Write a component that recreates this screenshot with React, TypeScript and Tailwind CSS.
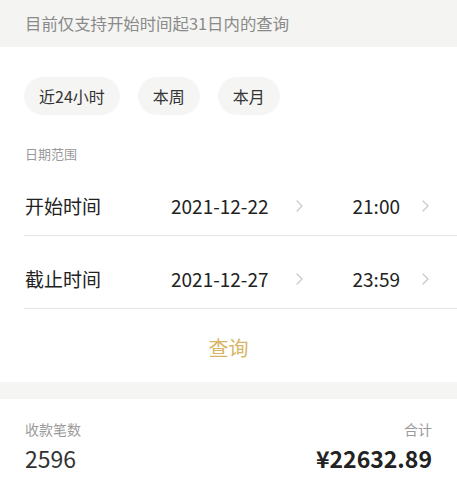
const font = "font-['Noto_Sans_CJK_SC','Noto_Sans',sans-serif]";

const Chevron = () => (
  <svg className="w-[7px] h-[12px] text-[#c8c8c8]" viewBox="0 0 7 12" fill="none" stroke="currentColor">
    <path d="M1 1l5 5-5 5" strokeWidth={1.2} strokeLinecap="round" strokeLinejoin="round" />
  </svg>
);

const rows = [
  { label: "开始时间", date: "2021-12-22", time: "21:00" },
  { label: "截止时间", date: "2021-12-27", time: "23:59" },
];

export default function App() {
  return (
    <div className={`w-[457px] h-[478px] bg-white overflow-hidden ${font}`}>
      <div className="h-[47px] bg-[#f4f4f2] flex items-center pl-[25px] text-[16.4px] text-[#8a8a8a]">
        目前仅支持开始时间起31日内的查询
      </div>

      <div className="flex gap-[18px] pl-[24px] pt-[30px]">
        {["近24小时", "本周", "本月"].map((t) => (
          <div key={t} className="h-[38px] px-[15px] rounded-full bg-[#f5f5f4] flex items-center text-[16px] text-[#333]">
            {t}
          </div>
        ))}
      </div>

      <div className="pl-[25px] pt-[30px] text-[13px] leading-[18px] text-[#9a9a9a]">日期范围</div>

      <div className="pl-[24px]">
        {rows.map((r) => (
          <div key={r.label} className="h-[73px] flex items-end pb-[16px] border-b border-[#e6e6e6] text-[19px] leading-[26px] text-[#222]">
            <div className="w-[147px] pl-[1px]">{r.label}</div>
            <div className="w-[125px]">{r.date}</div>
            <div className="h-[26px] flex items-center"><Chevron /></div>
            <div className="ml-auto mr-[22px]">{r.time}</div>
            <div className="mr-[28px] h-[26px] flex items-center"><Chevron /></div>
          </div>
        ))}
      </div>

      <div className="h-[73px] flex items-center justify-center pt-[4px] text-[20px] text-[#d8b464]">查询</div>

      <div className="h-[17px] bg-[#f5f5f4]" />

      <div className="px-[25px] pt-[20px] flex justify-between">
        <div>
          <div className="text-[14px] leading-[20px] text-[#9a9a9a]">收款笔数</div>
          <div className="text-[23px] leading-[30px] text-[#333] mt-[4px]">2596</div>
        </div>
        <div className="text-right">
          <div className="text-[14px] leading-[20px] text-[#9a9a9a]">合计</div>
          <div className="text-[23px] leading-[30px] text-[#222] font-bold mt-[4px]">¥22632.89</div>
        </div>
      </div>
    </div>
  );
}
